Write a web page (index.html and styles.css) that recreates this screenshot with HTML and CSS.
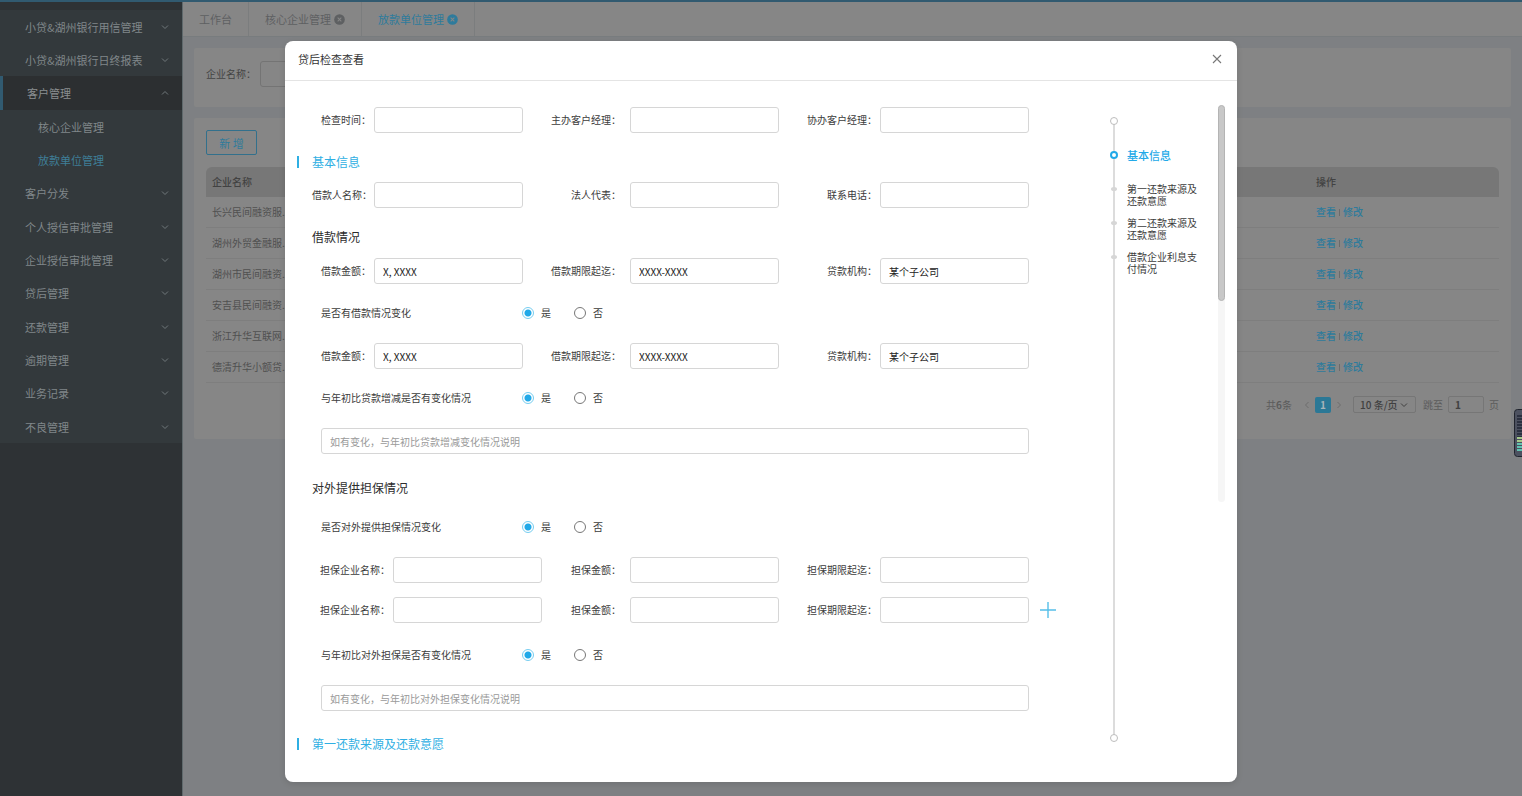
FILE: index.html
```html
<!DOCTYPE html>
<html lang="zh-CN">
<head>
<meta charset="utf-8">
<title>贷后检查查看</title>
<link rel="stylesheet" href="styles.css">
</head>
<body>
<svg class="defs" aria-hidden="true">
  <symbol id="down" viewBox="0 0 8 8"><path d="M1 2.5 4 5.5 7 2.5" fill="none" stroke="currentColor"/></symbol>
  <symbol id="clear" viewBox="0 0 12 12"><circle cx="6" cy="6" r="5.8" fill="currentColor"/><path d="M4 4 8 8M8 4 4 8" stroke="#868686" stroke-width="1.1"/></symbol>
</svg>
<div class="app">
  <nav class="sidebar">
    <ul class="menu">
      <li><a href="#">小贷&amp;湖州银行用信管理</a><svg class="arrow"><use href="#down"/></svg></li>
      <li><a href="#">小贷&amp;湖州银行日终报表</a><svg class="arrow"><use href="#down"/></svg></li>
      <li class="open"><a href="#">客户管理</a><svg class="arrow up"><use href="#down"/></svg></li>
      <li class="sub"><a href="#">核心企业管理</a></li>
      <li class="sub current"><a href="#">放款单位管理</a></li>
      <li><a href="#">客户分发</a><svg class="arrow"><use href="#down"/></svg></li>
      <li><a href="#">个人授信审批管理</a><svg class="arrow"><use href="#down"/></svg></li>
      <li><a href="#">企业授信审批管理</a><svg class="arrow"><use href="#down"/></svg></li>
      <li><a href="#">贷后管理</a><svg class="arrow"><use href="#down"/></svg></li>
      <li><a href="#">还款管理</a><svg class="arrow"><use href="#down"/></svg></li>
      <li><a href="#">逾期管理</a><svg class="arrow"><use href="#down"/></svg></li>
      <li><a href="#">业务记录</a><svg class="arrow"><use href="#down"/></svg></li>
      <li><a href="#">不良管理</a><svg class="arrow"><use href="#down"/></svg></li>
    </ul>
  </nav>
  <main class="main">
    <div class="tabs">
      <a class="tab" href="#">工作台</a>
      <a class="tab" href="#">核心企业管理<svg class="clear"><use href="#clear"/></svg></a>
      <a class="tab active" href="#">放款单位管理<svg class="clear"><use href="#clear"/></svg></a>
    </div>
    <div class="content">
      <section class="card search">
        <label for="company">企业名称：</label><input id="company" class="search-input" type="text">
      </section>
      <section class="card list">
        <button class="add" type="button">新 增</button>
        <table class="table">
          <thead><tr><th>企业名称</th><th class="ops">操作</th></tr></thead>
          <tbody>
            <tr><td>长兴民间融资服...</td><td><a href="#">查看</a><i class="sep"></i><a href="#">修改</a></td></tr>
            <tr><td>湖州外贸金融服...</td><td><a href="#">查看</a><i class="sep"></i><a href="#">修改</a></td></tr>
            <tr><td>湖州市民间融资...</td><td><a href="#">查看</a><i class="sep"></i><a href="#">修改</a></td></tr>
            <tr><td>安吉县民间融资...</td><td><a href="#">查看</a><i class="sep"></i><a href="#">修改</a></td></tr>
            <tr><td>浙江升华互联网...</td><td><a href="#">查看</a><i class="sep"></i><a href="#">修改</a></td></tr>
            <tr><td>德清升华小额贷...</td><td><a href="#">查看</a><i class="sep"></i><a href="#">修改</a></td></tr>
          </tbody>
        </table>
        <div class="pager">
          <span class="total">共<b>6</b>条</span>
          <button class="step" type="button" aria-label="上一页"><svg class="arrow left"><use href="#down"/></svg></button>
          <button class="page" type="button">1</button>
          <button class="step" type="button" aria-label="下一页"><svg class="arrow right"><use href="#down"/></svg></button>
          <span class="size"><select aria-label="每页条数"><option>10 条/页</option></select><svg class="arrow"><use href="#down"/></svg></span>
          <label for="jump">跳至</label><input id="jump" type="text" value="1"><span class="unit">页</span>
        </div>
      </section>
    </div>
  </main>
</div>

<div class="overlay">
  <div class="dialog" role="dialog" aria-labelledby="dialog-title">
    <header class="dialog-head">
      <h1 id="dialog-title">贷后检查查看</h1>
      <button class="close" type="button" aria-label="关闭"><svg viewBox="0 0 10 10"><path d="M1 1 9 9M9 1 1 9" stroke="#777" stroke-width="1.1"/></svg></button>
    </header>
    <div class="dialog-body">
      <form class="form">
        <div class="row">
          <label for="f1">检查时间：</label><input id="f1" type="text">
          <label for="f2">主办客户经理：</label><input id="f2" type="text">
          <label for="f3">协办客户经理：</label><input id="f3" type="text">
        </div>
        <h2 class="section">基本信息</h2>
        <div class="row after-section">
          <label for="f4">借款人名称：</label><input id="f4" type="text">
          <label for="f5">法人代表：</label><input id="f5" type="text">
          <label for="f6">联系电话：</label><input id="f6" type="text">
        </div>
        <h3 class="heading">借款情况</h3>
        <div class="row after-heading">
          <label for="f7">借款金额：</label><input id="f7" type="text" value="X, XXXX">
          <label for="f8">借款期限起迄：</label><input id="f8" type="text" value="XXXX-XXXX">
          <label for="f9">贷款机构：</label><input id="f9" type="text" value="某个子公司">
        </div>
        <fieldset class="choice">
          <legend>是否有借款情况变化</legend>
          <label><input type="radio" name="r1" checked>是</label><label><input type="radio" name="r1">否</label>
        </fieldset>
        <div class="row">
          <label for="f10">借款金额：</label><input id="f10" type="text" value="X, XXXX">
          <label for="f11">借款期限起迄：</label><input id="f11" type="text" value="XXXX-XXXX">
          <label for="f12">贷款机构：</label><input id="f12" type="text" value="某个子公司">
        </div>
        <fieldset class="choice">
          <legend>与年初比贷款增减是否有变化情况</legend>
          <label><input type="radio" name="r2" checked>是</label><label><input type="radio" name="r2">否</label>
        </fieldset>
        <input class="note" type="text" aria-label="贷款增减变化情况说明" placeholder="如有变化，与年初比贷款增减变化情况说明">
        <h3 class="heading spaced">对外提供担保情况</h3>
        <fieldset class="choice">
          <legend>是否对外提供担保情况变化</legend>
          <label><input type="radio" name="r3" checked>是</label><label><input type="radio" name="r3">否</label>
        </fieldset>
        <div class="row wide">
          <label for="f13">担保企业名称：</label><input id="f13" type="text">
          <label for="f14">担保金额：</label><input id="f14" type="text">
          <label for="f15">担保期限起迄：</label><input id="f15" type="text">
        </div>
        <div class="row wide tight">
          <label for="f16">担保企业名称：</label><input id="f16" type="text">
          <label for="f17">担保金额：</label><input id="f17" type="text">
          <label for="f18">担保期限起迄：</label><input id="f18" type="text">
          <button class="plus" type="button" aria-label="添加"><svg viewBox="0 0 16 16"><path d="M8 0V16M0 8H16" stroke="#55bfe9" stroke-width="1.4"/></svg></button>
        </div>
        <fieldset class="choice spaced">
          <legend>与年初比对外担保是否有变化情况</legend>
          <label><input type="radio" name="r4" checked>是</label><label><input type="radio" name="r4">否</label>
        </fieldset>
        <input class="note" type="text" aria-label="对外担保变化情况说明" placeholder="如有变化，与年初比对外担保变化情况说明">
        <h2 class="section spaced">第一还款来源及还款意愿</h2>
      </form>
      <nav class="anchors">
        <ol>
          <li class="on"><a href="#">基本信息</a></li>
          <li><a href="#">第一还款来源及还款意愿</a></li>
          <li><a href="#">第二还款来源及还款意愿</a></li>
          <li><a href="#">借款企业利息支付情况</a></li>
        </ol>
      </nav>
      <div class="scroll"><div class="thumb"></div></div>
    </div>
  </div>
</div>

<svg class="meter" viewBox="0 0 8 48" aria-hidden="true">
  <rect x=".5" y=".5" width="12" height="47" rx="3" fill="#4c5160" stroke="#20242e"/>
  <path d="M5.5 6V28" stroke="#2b3040" stroke-width="5" stroke-dasharray="2 1"/>
  <path d="M5.5 28V33" stroke="#a5c98a" stroke-width="5" stroke-dasharray="2 1"/>
  <path d="M5.5 34V43" stroke="#5fc3b2" stroke-width="5" stroke-dasharray="2 1"/>
</svg>
</body>
</html>
```
FILE: styles.css
```css
*, ::before, ::after { box-sizing: border-box; }
body {
  margin: 0;
  font: 10px/16px "Noto Sans CJK SC", sans-serif;
  color: #3c3c3c;
  background: #7e8083;
}
a { color: inherit; text-decoration: none; }
ul, ol { list-style: none; margin: 0; padding: 0; }
h1, h2, h3 { margin: 0; font-weight: 400; }
button, input, select { font: inherit; color: inherit; margin: 0; padding: 0; }
button { border: 0; background: none; }
input { min-width: 0; }
.defs { position: absolute; width: 0; height: 0; }
.arrow { width: 8px; height: 8px; flex: none; }
.up { transform: rotate(180deg); }
.left { transform: rotate(90deg); }
.right { transform: rotate(-90deg); }

.app { display: flex; min-height: 100vh; border-top: 2px solid #315a70; }

.sidebar {
  flex: none;
  width: 183px;
  padding-top: 8px;
  background: #2e3235;
  border-right: 1px solid #5f696c;
}
.menu { background: #33393c; font-size: 11px; color: #80878a; }
.menu li {
  display: flex;
  align-items: center;
  justify-content: space-between;
  height: 33px;
  padding: 0 13px 0 25px;
}
.menu li:nth-child(3n) { height: 34px; }
.menu .arrow { color: #70787b; }
.menu .open { padding-left: 24px; background: #2c2f31; border-left: 3px solid #315a70; color: #8a8e90; }
.menu .sub { padding-left: 38px; }
.menu .current { color: #3f7f98; }

.main { flex: 1; min-width: 0; }
.tabs {
  display: flex;
  height: 35px;
  background: #868686;
  border-bottom: 1px solid #787c7e;
  font-size: 11px;
  color: #5e6062;
}
.tab {
  display: flex;
  align-items: center;
  gap: 3px;
  padding: 0 16px;
  border-right: 1px solid #7b7d7e;
}
.tab.active { color: #2e7b9c; }
.clear { width: 11px; height: 11px; }
.content { display: flex; flex-direction: column; gap: 11px; padding: 11px; }
.card { background: #868686; border-radius: 2px; }
.search { display: flex; align-items: flex-start; gap: 4px; height: 59px; padding: 13px 12px; line-height: 26px; color: #444; }
.search-input { width: 148px; height: 26px; border: 1px solid #747474; border-radius: 3px; background: transparent; }
.list { padding: 12px 12px 26px; }
.add {
  display: block;
  width: 51px;
  height: 25px;
  border: 1px solid #32708c;
  border-radius: 2px;
  font-size: 11px;
  color: #2e7b9c;
}
.table { width: 100%; margin-top: 12px; border-spacing: 0; table-layout: fixed; color: #505050; }
.table th { height: 30px; padding: 0 6px; text-align: left; font-weight: 500; background: #777; color: #424242; }
.table th:first-child { border-radius: 6px 0 0 0; }
.table th:last-child { border-radius: 0 6px 0 0; }
.table td { height: 31px; padding: 0 6px; border-bottom: 1px solid #7e7e7e; }
.table .ops { width: 189px; }
.table a { color: #2e7b9c; font-weight: 500; }
.sep { display: inline-block; width: 1px; height: 7px; margin: 0 3px; background: #6b6b6b; }
.pager { display: flex; align-items: center; justify-content: flex-end; height: 17px; margin-top: 13px; color: #5c5c5c; }
.step { display: flex; align-items: center; justify-content: center; width: 16px; height: 16px; color: #6c6c6c; }
.total { margin-right: 7px; }
.page { width: 16px; height: 16px; border-radius: 2px; background: #2b7896; color: #a6b4ba; font-weight: 700; }
.size { display: flex; align-items: center; width: 63px; height: 17px; margin: 0 7px 0 6px; padding: 0 7px 0 6px; border: 1px solid #767676; border-radius: 2px; color: #404040; }
.size select { flex: 1; min-width: 0; appearance: none; border: 0; background: none; font-weight: 500; line-height: 15px; }
.pager input { width: 36px; height: 17px; margin: 0 5px; padding: 0 6px; border: 1px solid #767676; border-radius: 2px; background: none; font-weight: 700; color: #404040; }

.overlay { position: absolute; inset: 0; padding: 41px 32px 14px; }
.dialog { max-width: 952px; margin: 0 auto; border-radius: 8px; background: #fff; box-shadow: 0 2px 6px rgba(0, 0, 0, .12); }
.dialog-head {
  display: flex;
  align-items: center;
  justify-content: space-between;
  height: 40px;
  padding: 0 14px 3px 13px;
  border-bottom: 1px solid #e4e4e4;
}
.dialog-head h1 { font-size: 11px; color: #333; }
.close { display: flex; width: 12px; height: 12px; padding: 1px; }
.close svg { width: 10px; height: 10px; }
.dialog-body { display: flex; align-items: flex-start; padding: 24px 12px 28px; }

.form { flex: 1; min-width: 0; padding-top: 2px; }
.row {
  display: grid;
  grid-template-columns: 62px 1fr 107px 1fr 101px 1fr;
  align-items: center;
  margin-left: 15px;
  position: relative;
}
.row.wide { grid-template-columns: 81px 1fr 88px 1fr 101px 1fr; }
.row label { text-align: right; padding-right: 3px; white-space: nowrap; }
.row label:nth-of-type(2) { padding-right: 9px; }
.row input, .note {
  width: 100%;
  height: 26px;
  padding: 0 8px;
  border: 1px solid #d6d6d6;
  border-radius: 3px;
  background: #fff;
  color: #222;
  outline: 0;
}
.section, .heading { margin: 19px 0 0 15px; font-size: 12px; line-height: 20px; }
.section { display: flex; align-items: center; gap: 13px; margin-left: 0; color: #2fafe3; }
.section::before { content: ""; width: 2px; height: 12px; background: #2fafe3; }
.heading { color: #2c2c2c; }
.after-section { margin-top: 10px; }
.after-heading { margin-top: 11px; }
.choice { display: flex; align-items: center; height: 18px; margin: 20px 0 21px 24px; padding: 0; border: 0; }
.choice legend { float: left; width: 201px; padding: 0; }
.choice label { display: flex; align-items: center; gap: 7px; width: 52px; }
.choice input { appearance: none; width: 12px; height: 12px; border: 1px solid #777; border-radius: 50%; }
.choice input:checked { border-color: #76cdf0; background: radial-gradient(circle, #22a9e8 3px, #fff 4px); }
.note { display: block; width: calc(100% - 24px); margin-left: 24px; }
.note::placeholder { color: #9a9a9a; opacity: 1; }
.tight { margin-top: 14px; }
.spaced { margin-top: 23px; }
.heading.spaced { margin-top: 24px; }
.plus { position: absolute; left: calc(100% + 11px); width: 16px; height: 16px; }
.plus svg { display: block; }

.anchors { position: relative; align-self: stretch; flex: none; width: 84px; margin: 16px 21px 16px 84px; border-left: 2px solid #dcdcdc; }
.anchors::before, .anchors::after, .anchors li::before {
  content: "";
  position: absolute;
  left: -5px;
  width: 8px;
  height: 8px;
  border: 1px solid #bdbdbd;
  border-radius: 50%;
  background: #fff;
}
.anchors::before { top: -4px; }
.anchors::after { bottom: -4px; }
.anchors ol { padding-top: 28px; }
.anchors li { position: relative; height: 34px; padding-left: 12px; line-height: 12px; }
.anchors a { display: block; width: 72px; }
.anchors li::before { top: 4px; left: -4px; width: 6px; height: 4px; border: 0; background: #d6d6d6; }
.anchors .on { font-size: 11px; font-weight: 500; color: #22a9e8; }
.anchors .on::before { top: 2px; left: -5px; width: 8px; height: 8px; border: 2px solid #22a9e8; background: #fff; }

.scroll { flex: none; width: 7px; height: 397px; border-radius: 4px; background: #f6f6f6; }
.thumb { height: 196px; border: 1px solid #b4b4b4; border-radius: 4px; background: #c8c8c8; }

.meter { position: fixed; right: 0; top: 409px; width: 8px; height: 48px; }
```
